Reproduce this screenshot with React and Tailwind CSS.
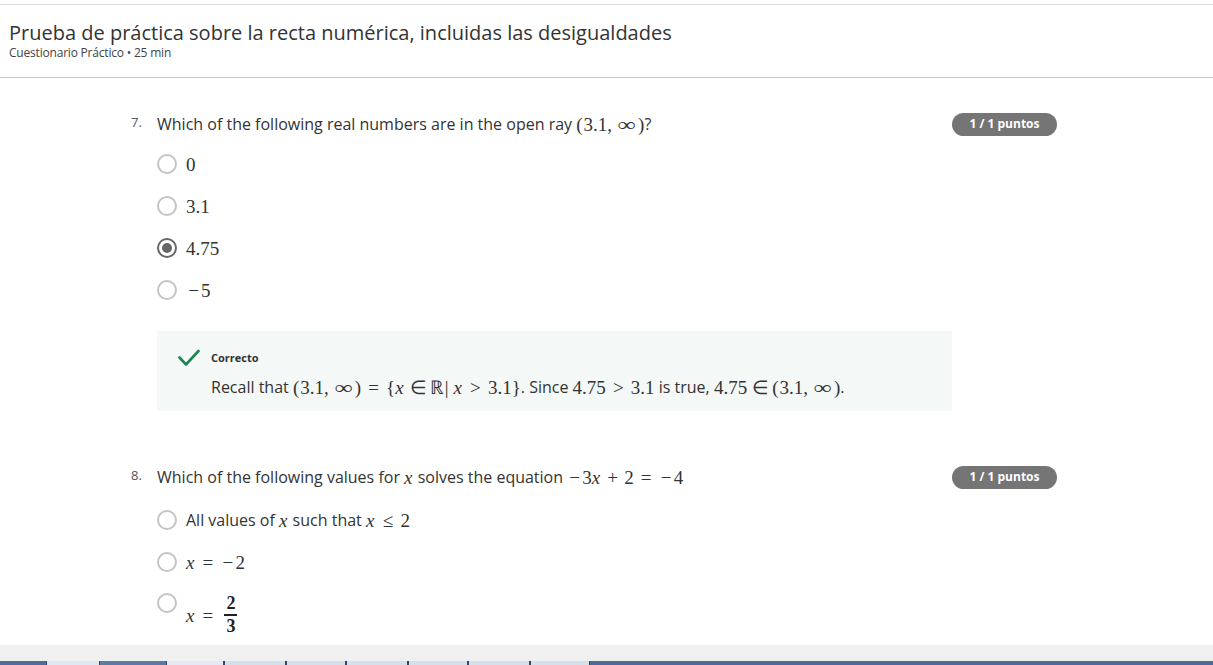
import React from "react";

const sans = { fontFamily: '"Open Sans", "Noto Sans", sans-serif' };

// math bits are set in a serif face, like the TeX output in the page
function M({ children }) {
  return (
    <span className="font-['Liberation_Serif',serif] text-[19px] leading-none text-[#333] inline-flex items-baseline whitespace-nowrap">
      {children}
    </span>
  );
}

function X() {
  return <i className="font-['Liberation_Serif',serif] pr-[1px]">x</i>;
}

// relation (=, >, ∈, ≤) gets a thick space, binary (+, −) a medium one
function Rel({ children }) {
  return <span className="inline-block w-[15px] text-center mx-[5px]">{children}</span>;
}

function Bin({ children }) {
  return <span className="inline-block w-[15px] text-center mx-[4px]">{children}</span>;
}

function Minus() {
  return <span className="inline-block w-[15px] text-center">−</span>;
}

function Inf() {
  return <span className="inline-block w-[21px] text-center scale-x-[1.35]">∞</span>;
}

function Ray() {
  return (
    <>
      <span className="pr-[1px]">(</span>3.1,<span className="w-[4px]" /><Inf /><span className="pl-[1px]">)</span>
    </>
  );
}

function Radio({ checked }) {
  return checked ? (
    <span className="w-[20px] h-[20px] rounded-full border-2 border-[#666] flex items-center justify-center shrink-0">
      <span className="w-[10px] h-[10px] rounded-full bg-[#666]" />
    </span>
  ) : (
    <span className="w-[20px] h-[20px] rounded-full border-2 border-[#c4c4c4] shrink-0" />
  );
}

function Option({ checked, children }) {
  return (
    <div className="h-[42px] flex items-center gap-[9px]">
      <Radio checked={checked} />
      <div className="flex items-center">{children}</div>
    </div>
  );
}

function Badge() {
  return (
    <span className="w-[105px] h-[23px] rounded-full bg-[#757575] text-white text-[12px] font-bold flex items-center justify-center shrink-0">
      1 / 1 puntos
    </span>
  );
}

function Question({ num, children }) {
  return (
    <div className="h-6 flex items-center">
      <span className="w-[26px] text-[13px] text-[#555] -mt-[2px]">{num}</span>
      <div className="flex-1 text-[16px] text-[#333] flex items-center">{children}</div>
      <Badge />
    </div>
  );
}

export default function App() {
  return (
    <div className="w-[1213px] h-[665px] bg-white flex flex-col overflow-hidden" style={sans}>
      {/* --- Header --- */}
      <div className="h-[4px] shrink-0" />
      <div className="border-t border-[#dcdcdc] border-b border-b-[#c4c4c4] h-[74px] px-[9px] pt-[15px] shrink-0">
        <h1 className="text-[20px] leading-[26px] text-[#333]">
          Prueba de práctica sobre la recta numérica, incluidas las desigualdades
        </h1>
        <p className="text-[12px] leading-[14px] text-[#444] tracking-[-0.2px]">Cuestionario Práctico • 25 min</p>
      </div>

      {/* --- Questions --- */}
      <div className="flex-1 ml-[131px] w-[926px]">
        <div className="pt-[34px]">
          <Question num="7.">
            <span>Which of the following real numbers are in the open ray&nbsp;</span>
            <M><Ray /></M>
            <span>?</span>
          </Question>

          <div className="pl-[26px] mt-[7px]">
            <Option><M>0</M></Option>
            <Option><M>3.1</M></Option>
            <Option checked><M>4.75</M></Option>
            <Option><M><Minus />5</M></Option>
          </div>

          <div className="ml-[26px] mt-[20px] w-[795px] h-[80px] bg-[#f4f8f6] pl-[21px] pt-[17px]">
            <div className="flex items-center gap-[11px] h-[20px]">
              <svg width="22" height="18" viewBox="0 0 22 18" fill="none">
                <path d="M1.5 8.5 L8 15.5 L20.5 2" stroke="#1f8354" strokeWidth="2.6" strokeLinecap="round" strokeLinejoin="round" />
              </svg>
              <span className="text-[11px] font-bold text-[#333]">Correcto</span>
            </div>
            <div className="pl-[33px] mt-[7px] h-[24px] flex items-center text-[16px] text-[#333]">
              <span>Recall that&nbsp;</span>
              <M>
                <Ray />
                <Rel>=</Rel>
                {"{"}<X /><Rel>∈</Rel>ℝ<span className="ml-[1px] mr-[5px]">|</span><X /><Rel>&gt;</Rel>3.1{"}"}
              </M>
              <span>. Since&nbsp;</span>
              <M>4.75<Rel>&gt;</Rel>3.1</M>
              <span>&nbsp;is true,&nbsp;</span>
              <M>4.75<Rel>∈</Rel><Ray /></M>
              <span>.</span>
            </div>
          </div>

          <div className="mt-[54px]">
            <Question num="8.">
              <span>Which of the following values for&nbsp;</span>
              <M><X /></M>
              <span>&nbsp;solves the equation&nbsp;</span>
              <M><Minus />3<X /><Bin>+</Bin>2<Rel>=</Rel><Minus />4</M>
            </Question>
          </div>

          <div className="pl-[26px] mt-[10px]">
            <Option>
              <span className="text-[16px] text-[#333]">All values of&nbsp;</span>
              <M><X /></M>
              <span className="text-[16px] text-[#333]">&nbsp;such that&nbsp;</span>
              <M><X /><Rel>≤</Rel>2</M>
            </Option>
            <Option><M><X /><Rel>=</Rel><Minus />2</M></Option>
            <div className="h-[50px] flex items-start gap-[9px] pt-[10px]">
              <Radio />
              <div className="flex items-center">
                <M><X /><Rel>=</Rel></M>
                <span className="flex flex-col items-center ml-[4px] font-['Liberation_Serif',serif] font-bold text-[18px] leading-[21px] text-[#222]">
                  <span>2</span>
                  <span className="w-[13px] h-[2px] bg-[#222]" />
                  <span>3</span>
                </span>
              </div>
            </div>
          </div>
        </div>
      </div>

      {/* --- bottom bar --- */}
      <div className="h-[16px] bg-[#f0f0f0] shrink-0" />
      <div className="h-[4px] shrink-0 flex bg-[#3f5f86]">
        <span className="w-[46px] bg-[#4b6f99]" />
        <span className="w-[54px] bg-[#dfe7f1] border-x border-[#2d4a6e]" />
        <span className="w-[66px] bg-[#5a7ba3]" />
        <span className="w-[58px] bg-[#e3eaf3] border-x border-[#2d4a6e]" />
        <span className="w-[62px] bg-[#d6e0ec] border-x border-[#2d4a6e]" />
        <span className="w-[60px] bg-[#d6e0ec] border-x border-[#2d4a6e]" />
        <span className="w-[62px] bg-[#d6e0ec] border-x border-[#2d4a6e]" />
        <span className="w-[60px] bg-[#d6e0ec] border-x border-[#2d4a6e]" />
        <span className="w-[62px] bg-[#d6e0ec] border-x border-[#2d4a6e]" />
        <span className="w-[60px] bg-[#d6e0ec] border-x border-[#2d4a6e]" />
        <span className="flex-1 bg-[#4a6d97]" />
      </div>
    </div>
  );
}
